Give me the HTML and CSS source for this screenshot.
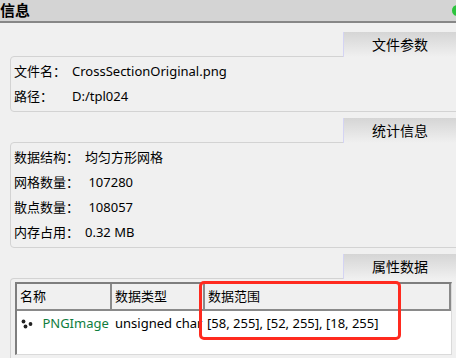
FILE: index.html
```html
<!DOCTYPE html>
<html lang="zh-CN">
<head>
<meta charset="utf-8">
<title>信息</title>
<link rel="stylesheet" href="styles.css">
</head>
<body>

	<div class="titlebar">
		<span class="title">信息</span>
		<span class="led"></span>
	</div>

	<div class="panel">

		<div class="group">
			<div class="tab-row"><div class="tab">文件参数</div></div>
			<div class="box fields">
				<span>文件名：</span><span>CrossSectionOriginal.png</span>
				<span>路径：</span><span>D:/tpl024</span>
			</div>
		</div>

		<div class="group">
			<div class="tab-row"><div class="tab">统计信息</div></div>
			<div class="box fields">
				<span>数据结构：</span><span>均匀方形网格</span>
				<span>网格数量：</span><span>&nbsp;107280</span>
				<span>散点数量：</span><span>&nbsp;108057</span>
				<span>内存占用：</span><span>0.32 MB</span>
			</div>
		</div>

		<div class="group">
			<div class="tab-row"><div class="tab">属性数据</div></div>
			<div class="box table-box">
				<div class="table">
					<div class="thead">
						<div class="th c1">名称</div>
						<div class="th c2">数据类型</div>
						<div class="th c3">数据范围</div>
					</div>
					<div class="tr">
						<div class="td c1">
							<svg class="dots" width="12" height="10" viewBox="0 0 12 10">
								<circle cx="2.5" cy="2.5" r="1.9" fill="#222"/>
								<circle cx="4.5" cy="7.5" r="1.9" fill="#222"/>
								<circle cx="9.5" cy="5" r="1.9" fill="#222"/>
							</svg>
							<span class="name">PNGImage</span>
						</div>
						<div class="td c2">unsigned char</div>
						<div class="td c3">[58, 255], [52, 255], [18, 255]</div>
					</div>
				</div>
			</div>
		</div>

	</div>

	<!-- annotation drawn over the table -->
	<div class="mark"></div>

</body>
</html>
```

FILE: styles.css
```css
body {
    margin: 0;
    width: 456px;
    height: 358px;
    overflow: hidden;
    position: relative;
    background-color: #f0f0f0;
    font-family: "Noto Sans", "Noto Sans CJK SC", sans-serif;
    font-size: 13px;
    color: #000;
}
.titlebar {
    height: 21px;
    background-color: #d4d4d4;
    border-bottom: 2px solid #878787;
    display: flex;
    justify-content: space-between;
    align-items: center;
}
.title {
    font-weight: bold;
    font-size: 15px;
    line-height: 21px;
}
.led {
    width: 11px;
    height: 11px;
    border-radius: 50%;
    background-color: #2bc43c;
    margin-right: -7px;
}
.panel {
    padding: 9px 0 0 10px;
}
.group {
    margin-bottom: 6px;
}
.tab-row {
    display: flex;
    justify-content: flex-end;
}
.tab {
    position: relative;
    z-index: 1;
    width: 112px;
    height: 25px;
    margin-bottom: -1px;
    border-left: 1px solid #d4d4f4;
    background: linear-gradient(#d5d5d5, #f0f0f0);
    text-align: center;
    line-height: 26px;
    font-size: 14px;
}
.box {
    border: 1px solid #d3d3d3;
    border-radius: 4px;
    margin-right: -8px;
}
.fields {
    display: grid;
    grid-template-columns: auto 1fr;
    column-gap: 6px;
    padding: 2px 3px;
    line-height: 25px;
}
.table-box {
    padding: 3px 0 0 4px;
    border-bottom: none;
    height: 80px;
}
.table {
    width: 434px;
    height: 70px;
    background-color: #fff;
    border-left: 2px solid #7e7e7e;
    border-top: 2px solid #7e7e7e;
    border-right: 1px solid #dadada;
    border-bottom: 1px solid #dadada;
}
.thead, .tr {
    display: flex;
}
.th {
    height: 27px;
    line-height: 25px;
    background-color: #f0f0f0;
    border-right: 2px solid #8a8a8a;
    border-bottom: 2px solid #8a8a8a;
    padding-left: 3px;
    box-sizing: border-box;
}
.c1 { width: 95px; }
.c2 { width: 93px; }
.c3 { flex: 1; }
.td {
    height: 24px;
    line-height: 24px;
    padding-left: 3px;
    box-sizing: border-box;
    white-space: nowrap;
    overflow: hidden;
}
.td.c3 {
    padding-left: 2px;
}
.dots {
    margin: 0 6px 0 1px;
    vertical-align: -1px;
}
.name {
    color: #0f7d3e;
}
.mark {
    position: absolute;
    left: 199px;
    top: 281px;
    width: 196px;
    height: 53px;
    border: 3px solid #ff2a1f;
    border-radius: 5px;
}
```
